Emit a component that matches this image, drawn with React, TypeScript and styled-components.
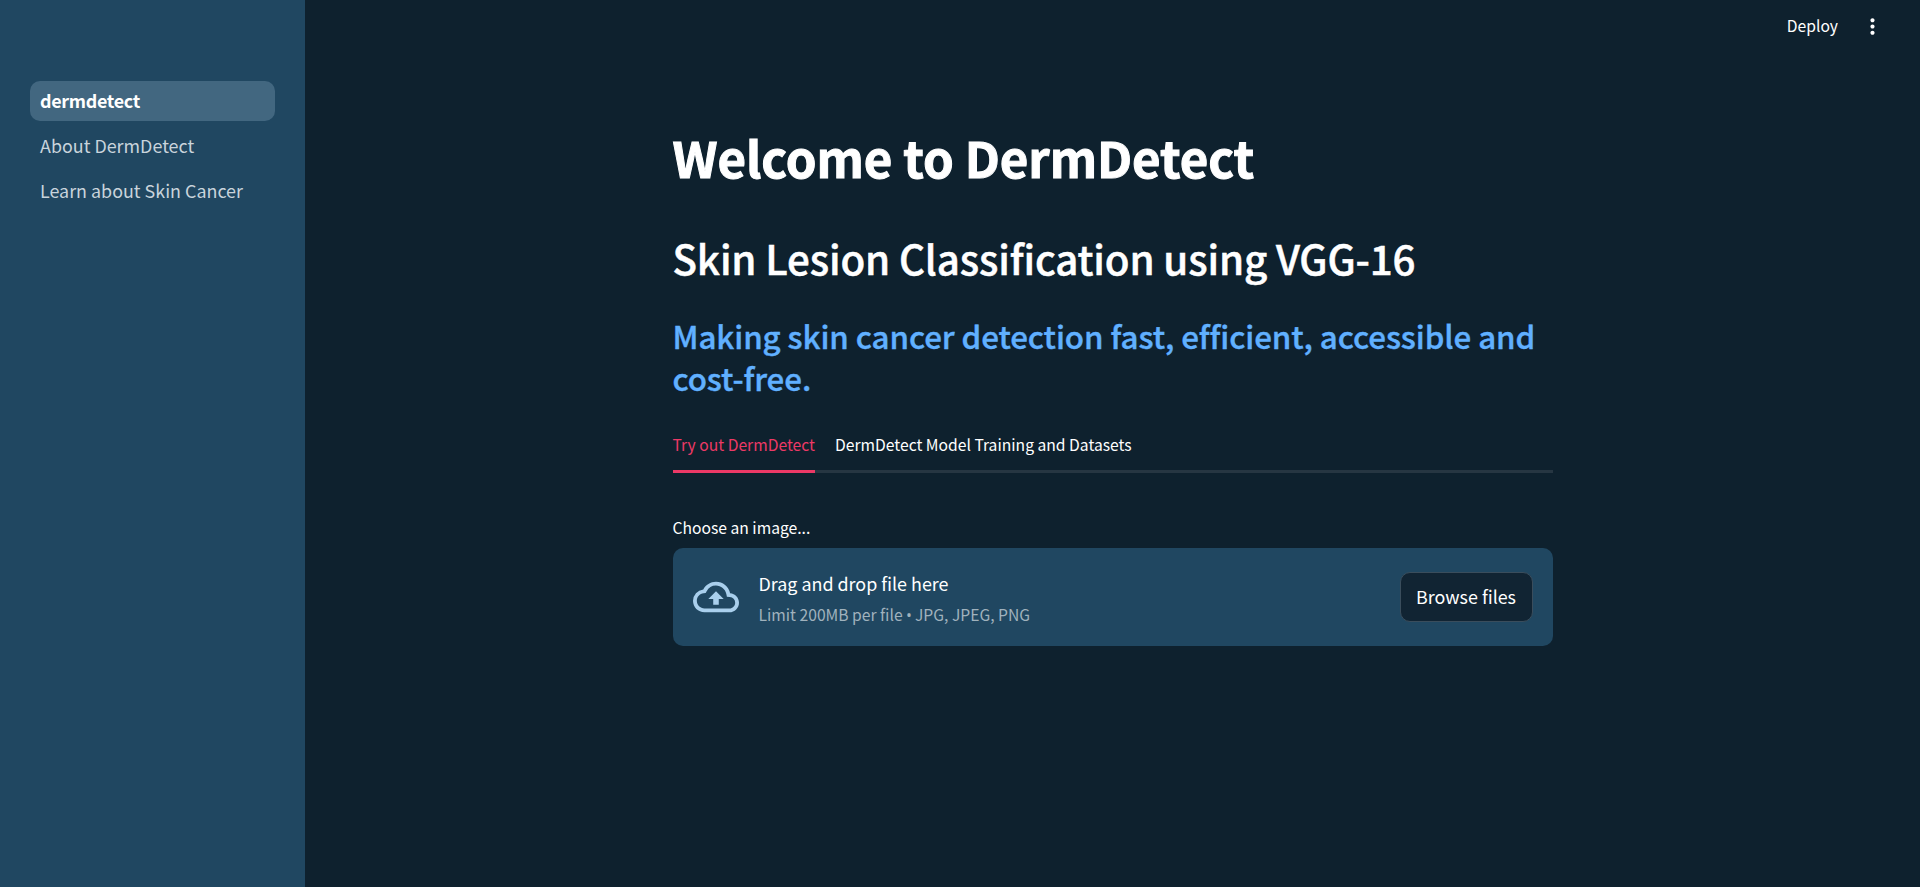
import React from 'react';
import styled, { createGlobalStyle } from 'styled-components';

const COLORS = {
  background: '#0e212e',
  secondary: '#204761',
  primary: '#ec3966',
  text: '#ffffff',
  blue: '#60b0ff',
  icon: '#a9cfec',
};

const PAGES = ['dermdetect', 'About DermDetect', 'Learn about Skin Cancer'];
const TABS = ['Try out DermDetect', 'DermDetect Model Training and Datasets'];

function Sidebar() {
  return (
    <SidebarWrapper>
      <NavList>
        {PAGES.map((page, i) => (
          <li key={page}>
            <NavLink href="#" $active={i === 0}>{page}</NavLink>
          </li>
        ))}
      </NavList>
    </SidebarWrapper>
  );
}

function Header() {
  return (
    <Toolbar>
      <DeployButton>Deploy</DeployButton>
      <MenuButton aria-label="Main menu">
        <svg width="25" height="25" viewBox="0 0 24 24" fill="currentColor">
          <path d="M12 8c1.1 0 2-.9 2-2s-.9-2-2-2-2 .9-2 2 .9 2 2 2zm0 2c-1.1 0-2 .9-2 2s.9 2 2 2 2-.9 2-2-.9-2-2-2zm0 6c-1.1 0-2 .9-2 2s.9 2 2 2 2-.9 2-2-.9-2-2-2z" />
        </svg>
      </MenuButton>
    </Toolbar>
  );
}

function FileUploader() {
  return (
    <section>
      <Label>Choose an image...</Label>
      <Dropzone>
        <CloudIcon viewBox="0 0 24 24" fill="currentColor">
          <path d="M19.35 10.04A7.49 7.49 0 0012 4C9.11 4 6.6 5.64 5.35 8.04A5.994 5.994 0 000 14c0 3.31 2.69 6 6 6h13c2.76 0 5-2.24 5-5 0-2.64-2.05-4.78-4.65-4.96zM19 18H6c-2.21 0-4-1.79-4-4 0-2.05 1.53-3.76 3.56-3.97l1.07-.11.5-.95A5.469 5.469 0 0112 6c2.62 0 4.88 1.86 5.39 4.43l.3 1.5 1.53.11A2.98 2.98 0 0122 15c0 1.65-1.35 3-3 3zM8 13h2.55v3h2.9v-3H16l-4-4z" />
        </CloudIcon>
        <Instructions>
          <DropText>Drag and drop file here</DropText>
          <Limit>Limit 200MB per file <Bullet>•</Bullet> JPG, JPEG, PNG</Limit>
        </Instructions>
        <BrowseButton>Browse files</BrowseButton>
      </Dropzone>
    </section>
  );
}

function App() {
  return (
    <>
      <GlobalStyle />
      <Layout>
        <Sidebar />
        <Main>
          <Header />
          <Content>
            <Title>Welcome to DermDetect</Title>
            <Subtitle>Skin Lesion Classification using VGG-16</Subtitle>
            <Tagline>
              Making skin cancer detection fast, efficient, accessible and cost-free.
            </Tagline>
            <TabList>
              {TABS.map((tab, i) => (
                <Tab key={tab} $active={i === 0}>{tab}</Tab>
              ))}
            </TabList>
            <FileUploader />
          </Content>
        </Main>
      </Layout>
    </>
  );
}

const GlobalStyle = createGlobalStyle`
  *, *::before, *::after {
    box-sizing: border-box;
  }

  body {
    margin: 0;
    background: ${COLORS.background};
    color: ${COLORS.text};
    font-family: 'Noto Sans CJK SC', 'Noto Sans', sans-serif;
    font-size: 17.9px;
  }

  h1, h2, h3, p, ul {
    margin: 0;
    padding: 0;
  }

  button {
    padding: 0;
    border: none;
    background: none;
    color: inherit;
    font: inherit;
  }
`;

const Layout = styled.div`
  display: flex;
  height: 100vh;
  overflow: hidden;
`;

const SidebarWrapper = styled.aside`
  flex: 0 0 305px;
  padding: 81px 30px 0;
  background: ${COLORS.secondary};
`;

const NavList = styled.ul`
  display: flex;
  flex-direction: column;
  gap: 5px;
  list-style: none;
`;

const NavLink = styled.a<{ $active: boolean }>`
  display: block;
  height: 40px;
  padding: 0 10px;
  border-radius: 10px;
  line-height: 38px;
  text-decoration: none;
  background: ${(p) => (p.$active ? '#426780' : 'transparent')};
  color: ${(p) => (p.$active ? COLORS.text : '#c9d4dc')};
  font-weight: ${(p) => (p.$active ? 700 : 400)};
  letter-spacing: ${(p) => (p.$active ? '-0.3px' : 'normal')};
`;

const Main = styled.main`
  flex: 1;
  display: flex;
  flex-direction: column;
  align-items: center;
`;

const Toolbar = styled.header`
  display: flex;
  align-self: stretch;
  justify-content: flex-end;
  align-items: center;
  gap: 22px;
  height: 52px;
  padding-right: 35px;
`;

const DeployButton = styled.button`
  font-size: 15.66px;
  line-height: 28px;
`;

const MenuButton = styled.button`
  display: flex;
`;

const Content = styled.div`
  width: 880px;
  padding-top: 72px;
`;

const Title = styled.h1`
  font-size: 49.2px;
  font-weight: 700;
  line-height: 66px;
  letter-spacing: -0.08px;
  -webkit-text-stroke: 1px;
`;

const Subtitle = styled.h2`
  margin-top: 41px;
  font-size: 40.3px;
  font-weight: 500;
  line-height: 54px;
  letter-spacing: -0.14px;
  -webkit-text-stroke: 0.5px;
`;

const Tagline = styled.h3`
  margin-top: 30px;
  color: ${COLORS.blue};
  font-size: 31.3px;
  font-weight: 500;
  line-height: 42px;
  letter-spacing: -0.08px;
  -webkit-text-stroke: 0.4px;
`;

const TabList = styled.div`
  display: flex;
  gap: 20px;
  height: 42px;
  margin-top: 32px;
  box-shadow: inset 0 -3px #263642;
`;

const Tab = styled.button<{ $active: boolean }>`
  padding-bottom: 11px;
  border-bottom: 3px solid ${(p) => (p.$active ? COLORS.primary : 'transparent')};
  color: ${(p) => (p.$active ? COLORS.primary : COLORS.text)};
  font-size: 15.66px;
  line-height: 28px;
`;

const Label = styled.p`
  margin: 41px 0 6px;
  font-size: 15.66px;
  line-height: 28px;
`;

const Dropzone = styled.div`
  display: flex;
  align-items: center;
  height: 98px;
  padding: 0 20px;
  border-radius: 10px;
  background: ${COLORS.secondary};
`;

const CloudIcon = styled.svg`
  width: 46px;
  height: 46px;
  margin-right: 20px;
  color: ${COLORS.icon};
`;

const Instructions = styled.div`
  display: flex;
  flex-direction: column;
  gap: 3px;
`;

const DropText = styled.span`
  line-height: 32px;
`;

const Limit = styled.small`
  color: #a0b2bd;
  font-size: 15.66px;
  line-height: 25px;
`;

const Bullet = styled.span`
  margin-right: -0.5px;
  font-family: 'Open Sans', sans-serif;
`;

const BrowseButton = styled.button`
  width: 133px;
  height: 50px;
  margin-left: auto;
  padding-bottom: 3px;
  border: 1px solid #3a4d5c;
  border-radius: 10px;
  background: #112433;
`;

export default App;
